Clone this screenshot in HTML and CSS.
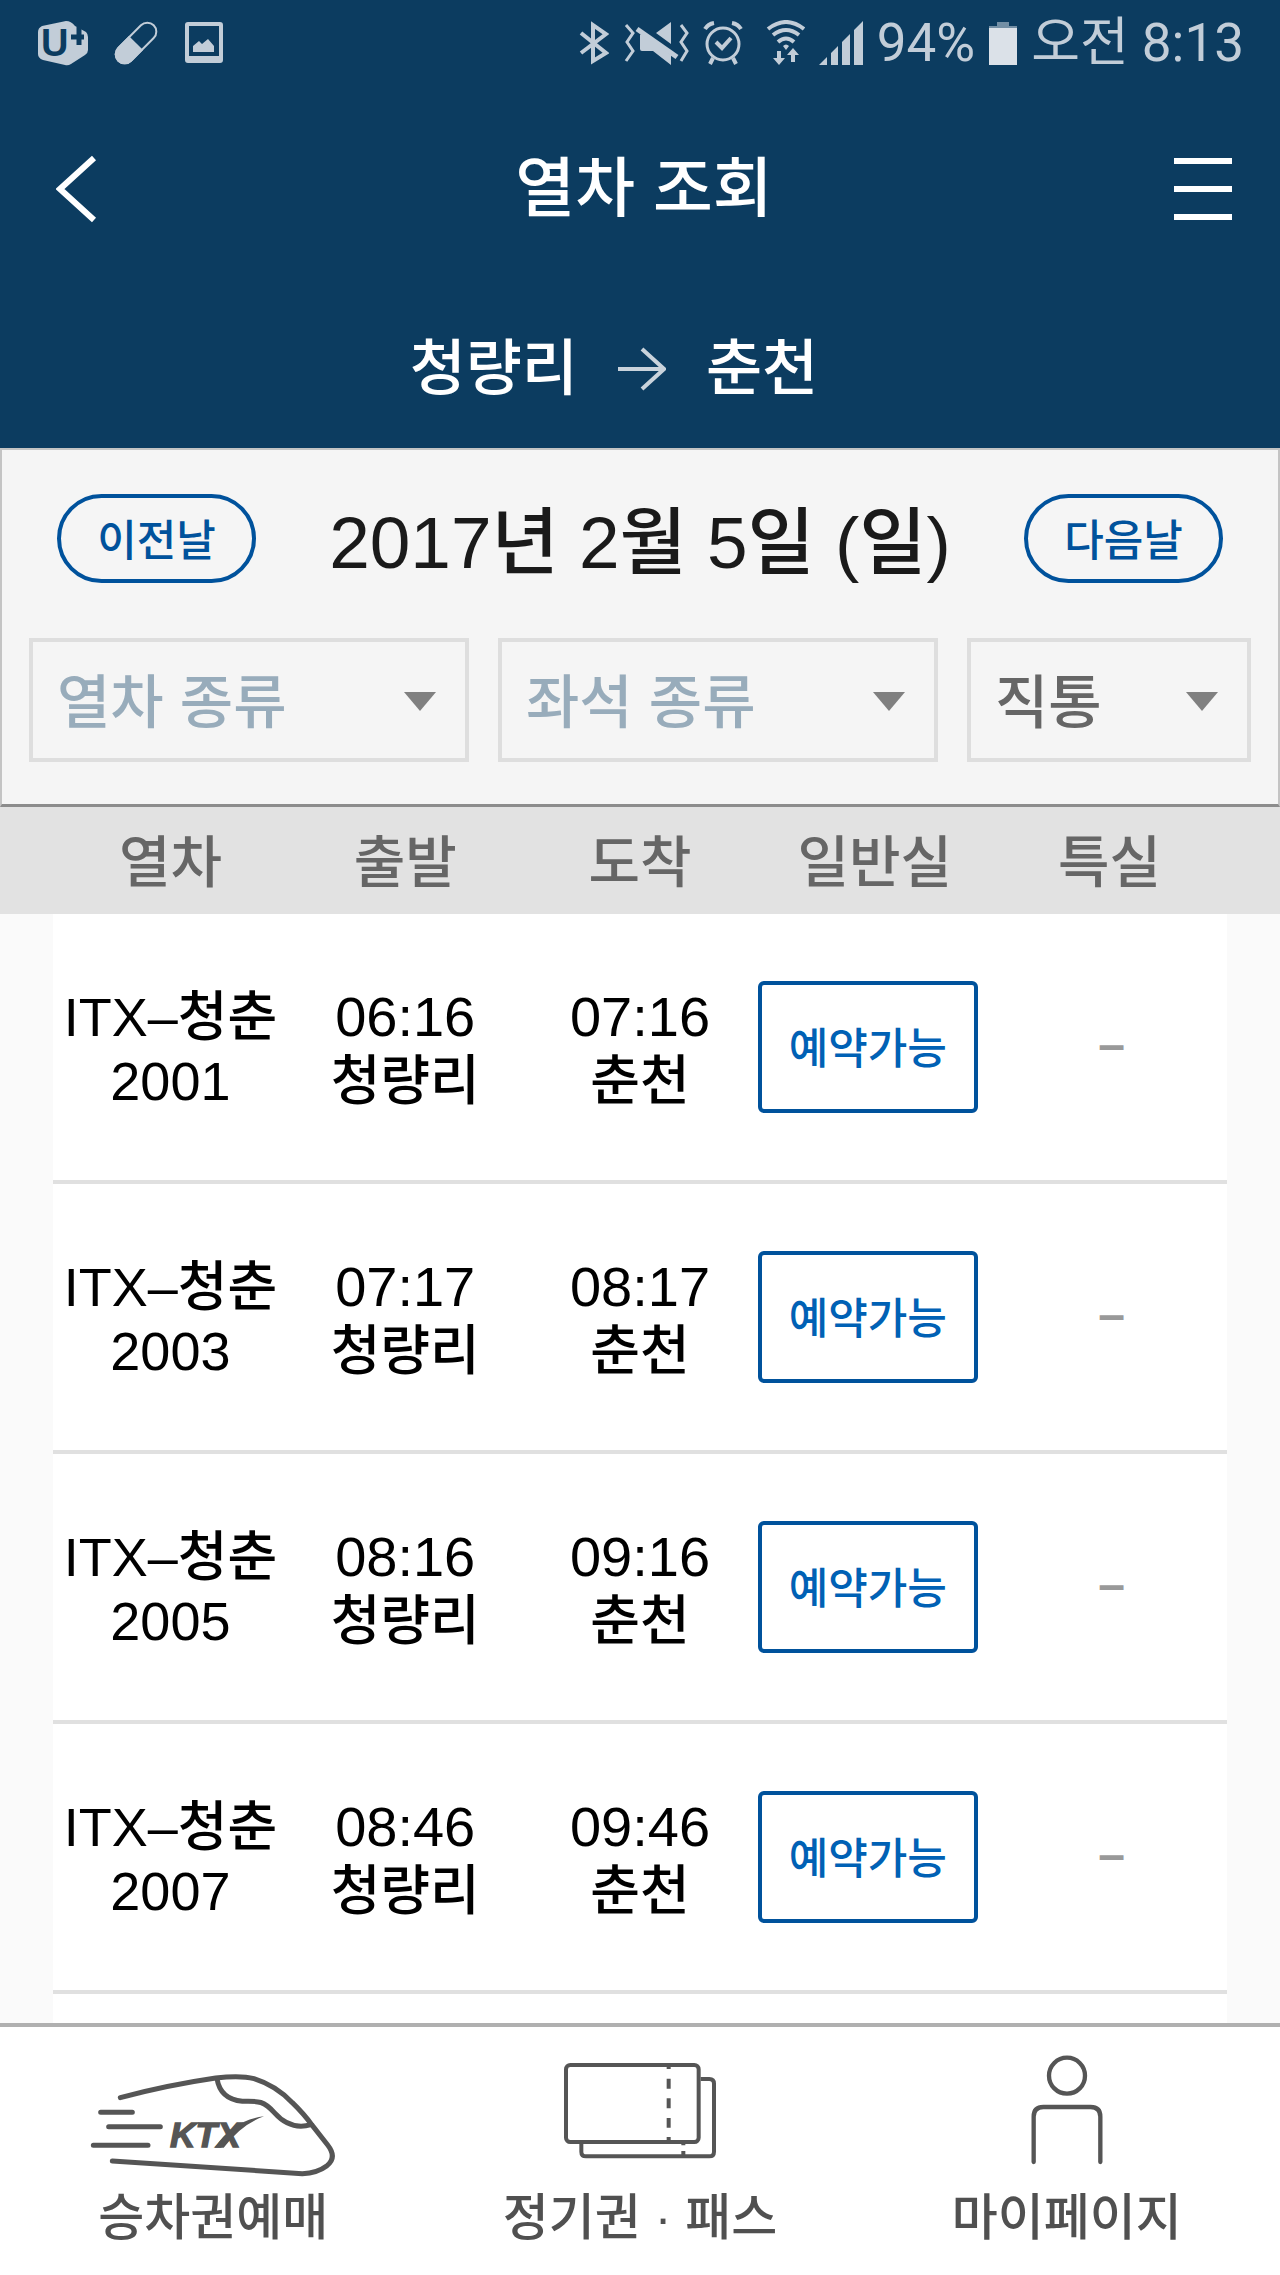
FILE: index.html
```html
<!DOCTYPE html>
<html lang="ko">
<head>
    <meta charset="UTF-8">
    <meta name="viewport" content="width=device-width, initial-scale=1.0">
    <title>열차 조회</title>
    <link rel="stylesheet" href="styles.css">
</head>
<body>
    <header class="header">
        <!-- Status bar -->
        <div class="status-bar">
            <div class="status-left">
                <svg width="50" height="46" viewBox="0 0 50 46">
                    <path d="M4 6 L28 1 Q33 1 37 6 L48 12 Q50 14 50 17 V30 Q50 33 47 35 L33 44 Q30 46 27 45 L5 40 Q0 38 0 34 V12 Q0 8 4 6 Z" fill="#c2cdd8"/>
                    <text class="carrier" x="3" y="36">U</text>
                    <path d="M41 7 V25 M33 17 H46" stroke="#0c3c60" stroke-width="5"/>
                </svg>
                <svg width="44" height="44" viewBox="0 0 44 44">
                    <g transform="translate(22 22) rotate(-45)">
                        <rect x="-25" y="-9" width="50" height="18" rx="9" fill="none" stroke="#c2cdd8" stroke-width="2"/>
                        <path d="M0 -10 H-16 A10 10 0 0 0 -16 10 H0 Z" fill="#c2cdd8"/>
                    </g>
                </svg>
                <svg width="40" height="44" viewBox="0 0 40 44">
                    <path fill-rule="evenodd" d="M4 1 H36 Q39 1 39 4 V39 Q39 42 36 42 H4 Q1 42 1 39 V4 Q1 1 4 1 Z M5 5 V35 H35 V5 Z" fill="#c2cdd8"/>
                    <path d="M9 31 V25 L15 20 L18 23 L24 18 L30 25 V31 Z" fill="#c2cdd8"/>
                </svg>
            </div>
            <div class="status-right">
                <svg width="30" height="44" viewBox="0 0 30 44">
                    <path d="M2 12 L27 32 L14 40 V4 L27 13 L2 32" fill="none" stroke="#c2cdd8" stroke-width="4"/>
                </svg>
                <svg width="66" height="46" viewBox="0 0 66 46">
                    <path d="M3 5 L10 13 L4 22 L10 31 L3 41 M58 5 L64 13 L58 22 L64 31 L58 41" fill="none" stroke="#c2cdd8" stroke-width="3"/>
                    <path d="M33 13 L48 2 V24 Z M19 13 L48 35 V45 L30 31 H19 Q17 31 17 29 V15 Z" fill="#c2cdd8"/>
                    <path d="M14 9 L54 37" stroke="#c2cdd8" stroke-width="5"/>
                </svg>
                <svg width="40" height="46" viewBox="0 0 40 46">
                    <g fill="none" stroke="#c2cdd8">
                        <circle cx="20" cy="24" r="16" stroke-width="3"/>
                        <path d="M13 22 L19 28 L28 18" stroke-width="4"/>
                        <path d="M2 9 Q5 4 11 3 M38 9 Q35 4 29 3" stroke-width="4"/>
                        <path d="M10 38 L7 44 M30 38 L33 44" stroke-width="4"/>
                    </g>
                </svg>
                <svg width="48" height="46" viewBox="0 0 48 46">
                    <g fill="none" stroke="#c2cdd8" stroke-width="4">
                        <path d="M11 9 Q29 -5 47 9"/>
                        <path d="M16 15 Q29 5 42 15"/>
                        <path d="M21 22 Q29 15 37 22"/>
                    </g>
                    <path d="M26 26 Q29 23 32 26 L29 30 Z M20 31 H24 V38 H28 L22 45 L16 38 H20 Z M34 42 H38 V35 H42 L36 28 L30 35 H34 Z" fill="#c2cdd8"/>
                </svg>
                <svg width="44" height="44" viewBox="0 0 44 44">
                    <path d="M0 44 L8 36 V44 Z M12 44 V32 L19 25 V44 Z M23 44 V21 L31 13 V44 Z M35 44 V9 L44 0 V44 Z" fill="#c2cdd8"/>
                </svg>
                <span>94%</span>
                <svg width="28" height="44" viewBox="0 0 28 44">
                    <path d="M8 1 H20 V5 H28 V8 H0 V5 H8 Z" fill="#738fa5"/>
                    <rect y="7" width="28" height="37" fill="#dbe1e8"/>
                </svg>
                <span>오전 8:13</span>
            </div>
        </div>

        <!-- Title bar -->
        <div class="title-bar">
            <button class="icon-btn" aria-label="뒤로">
                <svg width="42" height="68" viewBox="0 0 42 68">
                    <path d="M38 3 L4 34 L38 65" fill="none" stroke="#ffffff" stroke-width="6"/>
                </svg>
            </button>
            <h1>열차 조회</h1>
            <button class="icon-btn menu" aria-label="메뉴">
                <svg width="58" height="64" viewBox="0 0 58 64">
                    <path d="M0 4 H58 M0 32 H58 M0 60 H58" stroke="#ffffff" stroke-width="6"/>
                </svg>
            </button>
        </div>

        <div class="route">
            <span class="route-from">청량리</span>
            <svg width="48" height="44" viewBox="0 0 48 44">
                <path d="M0 22 H46 M24 2 L46 22 L24 42" fill="none" stroke="#c9d3dc" stroke-width="4"/>
            </svg>
            <span>춘천</span>
        </div>
    </header>

    <!-- Date and filters -->
    <section class="search-panel">
        <div class="date-row">
            <button class="day-btn">이전날</button>
            <h2>2017년 2월 5일 (일)</h2>
            <button class="day-btn">다음날</button>
        </div>
        <div class="filters">
            <div class="filter wide">
                <select aria-label="열차 종류">
                    <option>열차 종류</option>
                </select>
            </div>
            <div class="filter wide">
                <select aria-label="좌석 종류">
                    <option>좌석 종류</option>
                </select>
            </div>
            <div class="filter narrow">
                <select class="selected" aria-label="여정">
                    <option>직통</option>
                </select>
            </div>
        </div>
    </section>

    <!-- Train list -->
    <main class="train-list">
        <table>
            <thead>
                <tr>
                    <th>열차</th>
                    <th>출발</th>
                    <th>도착</th>
                    <th>일반실</th>
                    <th>특실</th>
                </tr>
            </thead>
            <tbody>
                <tr>
                    <td>ITX–청춘<br>2001</td>
                    <td><time>06:16</time><br>청량리</td>
                    <td><time>07:16</time><br>춘천</td>
                    <td class="seat"><button class="reserve-btn">예약가능</button></td>
                    <td class="none">–</td>
                </tr>
                <tr>
                    <td>ITX–청춘<br>2003</td>
                    <td><time>07:17</time><br>청량리</td>
                    <td><time>08:17</time><br>춘천</td>
                    <td class="seat"><button class="reserve-btn">예약가능</button></td>
                    <td class="none">–</td>
                </tr>
                <tr>
                    <td>ITX–청춘<br>2005</td>
                    <td><time>08:16</time><br>청량리</td>
                    <td><time>09:16</time><br>춘천</td>
                    <td class="seat"><button class="reserve-btn">예약가능</button></td>
                    <td class="none">–</td>
                </tr>
                <tr>
                    <td>ITX–청춘<br>2007</td>
                    <td><time>08:46</time><br>청량리</td>
                    <td><time>09:46</time><br>춘천</td>
                    <td class="seat"><button class="reserve-btn">예약가능</button></td>
                    <td class="none">–</td>
                </tr>
            </tbody>
        </table>
    </main>

    <!-- Bottom tabs -->
    <nav class="tab-bar">
        <a href="#" class="tab">
            <svg width="248" height="124" viewBox="90 252 744 372">
                <g fill="none" stroke="#555555" stroke-width="15" stroke-linecap="round" stroke-linejoin="round">
                    <path d="M184 383 Q320 346 470 324 Q545 315 585 326 Q650 346 700 398 Q735 432 758 464 L806 525 Q835 562 804 587 Q775 609 730 611 L160 573"/>
                    <path d="M474 326 Q484 388 550 394 C600 392 616 394 646 428 Q694 482 756 464"/>
                    <path d="M125 427 H220 M149 470 H304 M103 526 H267"/>
                </g>
                <text class="train-logo" x="333" y="532">KTX</text>
                <path d="M468 533 Q520 452 615 439 Q548 462 494 533 Z" fill="#555555"/>
            </svg>
            <span>승차권예매</span>
        </a>
        <a href="#" class="tab">
            <svg width="248" height="124" viewBox="110 252 744 372">
                <g fill="none" stroke="#555555" stroke-width="12">
                    <rect x="260" y="285" width="398" height="231" rx="13"/>
                    <path d="M664 327 H690 Q704 327 704 341 V545 Q704 559 690 559 H320 Q306 559 306 545 V520"/>
                    <path d="M568 290 V297 M568 326 V356 M568 385 V415 M568 444 V473 M568 501 V512 M612 520 V526 M612 543 V556"/>
                </g>
            </svg>
            <span>정기권 · 패스</span>
        </a>
        <a href="#" class="tab">
            <svg width="248" height="124" viewBox="68 252 744 372">
                <g fill="none" stroke="#555555" stroke-width="13" stroke-linecap="round">
                    <circle cx="440" cy="317" r="54"/>
                    <path d="M340 576 V440 Q340 411 369 411 H511 Q540 411 540 440 V576"/>
                </g>
            </svg>
            <span>마이페이지</span>
        </a>
    </nav>
</body>
</html>
```
FILE: styles.css
```css
/* General Styling */
* {
    box-sizing: border-box;
}

body {
    margin: 0;
    min-height: 100vh;
    display: flex;
    flex-direction: column;
    font-family: 'Liberation Sans', 'Noto Sans CJK KR', sans-serif;
    font-weight: 500;
    color: #000;
    background: #fafafa;
}

button, select {
    font-family: inherit;
    font-weight: inherit;
    margin: 0;
    padding: 0;
    background: none;
    cursor: pointer;
}

h1, h2 {
    margin: 0;
    font-weight: 500;
}

svg {
    display: block;
}

/* Header */
.header {
    background: #0c3c60;
    color: #fff;
}

.status-bar {
    height: 86px;
    padding: 0 36px 0 38px;
    display: flex;
    align-items: center;
    justify-content: space-between;
    font-family: Roboto, 'Noto Sans CJK KR', sans-serif;
    font-size: 53px;
    font-weight: 400;
    line-height: 86px;
    color: #c2cdd8;
}

.status-left {
    display: flex;
    align-items: center;
    gap: 26px;
}

.status-right {
    display: flex;
    align-items: center;
    gap: 14px;
}

.carrier {
    font-family: 'Liberation Sans', sans-serif;
    font-size: 38px;
    font-weight: bold;
    fill: #0c3c60;
}

.title-bar {
    height: 204px;
    padding: 2px 48px 0 56px;
    display: grid;
    grid-template-columns: 1fr auto 1fr;
    align-items: center;
}

.title-bar h1 {
    font-size: 65px;
    line-height: 96px;
}

.icon-btn {
    border: none;
    justify-self: start;
}

.icon-btn.menu {
    justify-self: end;
}

.route {
    height: 158px;
    padding-left: 4px;
    display: grid;
    grid-template-columns: 1fr auto 1fr;
    align-items: center;
    gap: 40px;
    font-size: 61px;
    line-height: 90px;
}

.route-from {
    text-align: right;
}

/* Date and filters */
.search-panel {
    background: #f5f5f5;
    border: 2px solid #c4c4c4;
    border-bottom: 3px solid #8c8c8c;
    padding: 44px 27px 42px;
}

.date-row {
    display: flex;
    align-items: center;
    justify-content: space-between;
    padding: 0 28px;
    margin-bottom: 55px;
}

.date-row h2 {
    height: 89px;
    padding-top: 4px;
    font-size: 73px;
    line-height: 89px;
    color: #1a1a1a;
}

.day-btn {
    width: 199px;
    height: 89px;
    padding-bottom: 4px;
    border: 4px solid #00529c;
    border-radius: 45px;
    font-size: 43px;
    color: #00529c;
}

.filters {
    display: flex;
    gap: 29px;
}

.filter {
    position: relative;
}

.filter.wide {
    flex: 440;
}

.filter.narrow {
    flex: 284;
}

.filter::after {
    content: '';
    position: absolute;
    top: 54px;
    right: 33px;
    border: 16px solid transparent;
    border-top: 19px solid #808080;
    border-bottom: none;
    pointer-events: none;
}

.filter select {
    width: 100%;
    height: 124px;
    padding: 4px 24px 0;
    border: 4px solid #dedede;
    border-radius: 0;
    appearance: none;
    font-size: 58px;
    color: #98acbb;
}

.filter select.selected {
    color: #666;
}

/* Train list */
.train-list {
    flex: 1;
    margin: 0 53px;
    background: #fff;
}

table {
    width: 100%;
    table-layout: fixed;
    border-collapse: separate;
    border-spacing: 0;
}

/* the grey band runs past the table to both screen edges */
thead {
    background: #e2e2e2;
    box-shadow: -53px 0 #e2e2e2, 53px 0 #e2e2e2;
}

th {
    height: 107px;
    padding: 4px 0 0;
    font-size: 56px;
    font-weight: 500;
    line-height: 84px;
    color: #666;
}

td {
    height: 270px;
    padding: 4px 0 0;
    border-bottom: 4px solid #e0e0e0;
    font-size: 54px;
    line-height: 64px;
    text-align: center;
    white-space: nowrap;
}

time {
    font-size: 56px;
}

td.seat {
    padding: 0 14px 0 0;
}

.reserve-btn {
    display: block;
    width: 220px;
    height: 132px;
    margin: 0 auto;
    padding-bottom: 4px;
    border: 4px solid #00529c;
    border-radius: 6px;
    font-size: 43px;
    color: #0061b5;
}

td.none {
    padding: 0 0 4px 4px;
    font-size: 48px;
    font-weight: bold;
    color: #999;
}

/* Bottom tabs */
.tab-bar {
    height: 252px;
    padding-top: 27px;
    display: flex;
    border-top: 4px solid #b0b0b0;
    background: #fff;
}

.tab {
    flex: 1;
    display: flex;
    flex-direction: column;
    align-items: center;
    gap: 4px;
    font-size: 50px;
    line-height: 72px;
    color: #505050;
    text-decoration: none;
}

.train-logo {
    font-size: 106px;
    font-weight: bold;
    font-style: italic;
    fill: #555;
    stroke: #555;
    stroke-width: 4px;
}
```
